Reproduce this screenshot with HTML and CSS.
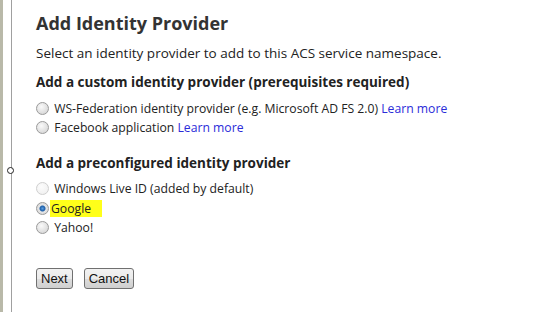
FILE: index.html
```html
<!DOCTYPE html>
<html lang="en">
<head>
    <meta charset="UTF-8">
    <title>Add Identity Provider</title>
    <link rel="stylesheet" href="styles.css">
</head>
<body>
    <div class="frame">
        <div class="edge"></div>
        <div class="divider">
            <span class="handle"></span>
        </div>
        <div class="content">
            <h1>Add Identity Provider</h1>
            <p class="intro">Select an identity provider to add to this ACS service namespace.</p>

            <h2>Add a custom identity provider (prerequisites required)</h2>
            <div class="options">
                <label class="option"><input type="radio" name="idp"> WS-Federation identity provider (e.g. Microsoft AD FS 2.0) <a href="#">Learn more</a></label>
                <label class="option"><input type="radio" name="idp"> Facebook application <a href="#">Learn more</a></label>
            </div>

            <h2 class="second">Add a preconfigured identity provider</h2>
            <div class="options">
                <label class="option"><input type="radio" name="idp" disabled> Windows Live ID (added by default)</label>
                <label class="option"><input type="radio" name="idp" checked> <span class="marked">Google</span></label>
                <label class="option"><input type="radio" name="idp"> Yahoo!</label>
            </div>

            <div class="actions">
                <button class="btn">Next</button>
                <button class="btn">Cancel</button>
            </div>
        </div>
    </div>
</body>
</html>
```

FILE: styles.css
```css
body {
    margin: 0;
    padding: 0;
    background-color: #fff;
    font-family: "Open Sans", "DejaVu Sans", sans-serif;
    color: #222;
    overflow: hidden;
}

.frame {
    display: flex;
    height: 312px;
}

.edge {
    width: 3px;
    background-color: #b9b9a9;
}

.divider {
    position: relative;
    width: 1px;
    margin-left: 8px;
    background-color: #a0a0a0;
}

.handle {
    position: absolute;
    left: -4px;
    top: 167px;
    width: 7px;
    height: 7px;
    box-sizing: border-box;
    border: 1px solid #222;
    border-radius: 50%;
    background-color: #fff;
}

.content {
    padding: 12px 0 0 24px;
}

h1 {
    margin: 0;
    font-size: 18px;
    font-weight: bold;
    color: #333;
    line-height: 22px;
}

.intro {
    margin: 10px 0 0;
    font-size: 13.5px;
    line-height: 18px;
}

h2 {
    margin: 11px 0 0;
    font-size: 13.5px;
    font-weight: bold;
    line-height: 18px;
}

h2.second {
    margin-top: 16px;
}

.options {
    display: flex;
    flex-direction: column;
    margin-top: 7.5px;
}

.option {
    display: flex;
    align-items: center;
    height: 19.5px;
    font-size: 12.2px;
    white-space: pre;
}

.option a {
    color: #2b2bd9;
    text-decoration: none;
}

input[type="radio"] {
    appearance: none;
    width: 13px;
    height: 13px;
    margin: 0 2px 0 0;
    border: 1px solid #9a9a9a;
    border-radius: 50%;
    background: radial-gradient(circle at 40% 35%, #fafafa 0, #e2e2e2 55%, #cfcfcf 100%);
}

input[type="radio"]:disabled {
    border-color: #cfcfcf;
    background: radial-gradient(circle at 40% 35%, #fcfcfc 0, #eeeeee 100%);
}

input[type="radio"]:checked {
    background: radial-gradient(circle, #5a9ce0 0, #1d5fa8 2.5px, #e6e6e6 3.5px, #d0d0d0 100%);
}

.marked {
    background-color: #ffff1a;
    padding: 0 11px 0 1px;
    margin-left: -1px;
    line-height: 17px;
}

.actions {
    display: flex;
    gap: 11px;
    margin-top: 30px;
}

.btn {
    height: 21px;
    padding: 0 4px;
    font-family: "Liberation Sans", Arial, sans-serif;
    font-size: 13px;
    color: #111;
    border: 1px solid #707070;
    border-radius: 3px;
    background: linear-gradient(#f2f2f2, #ebebeb 50%, #dddddd 51%, #cfcfcf);
}
```
